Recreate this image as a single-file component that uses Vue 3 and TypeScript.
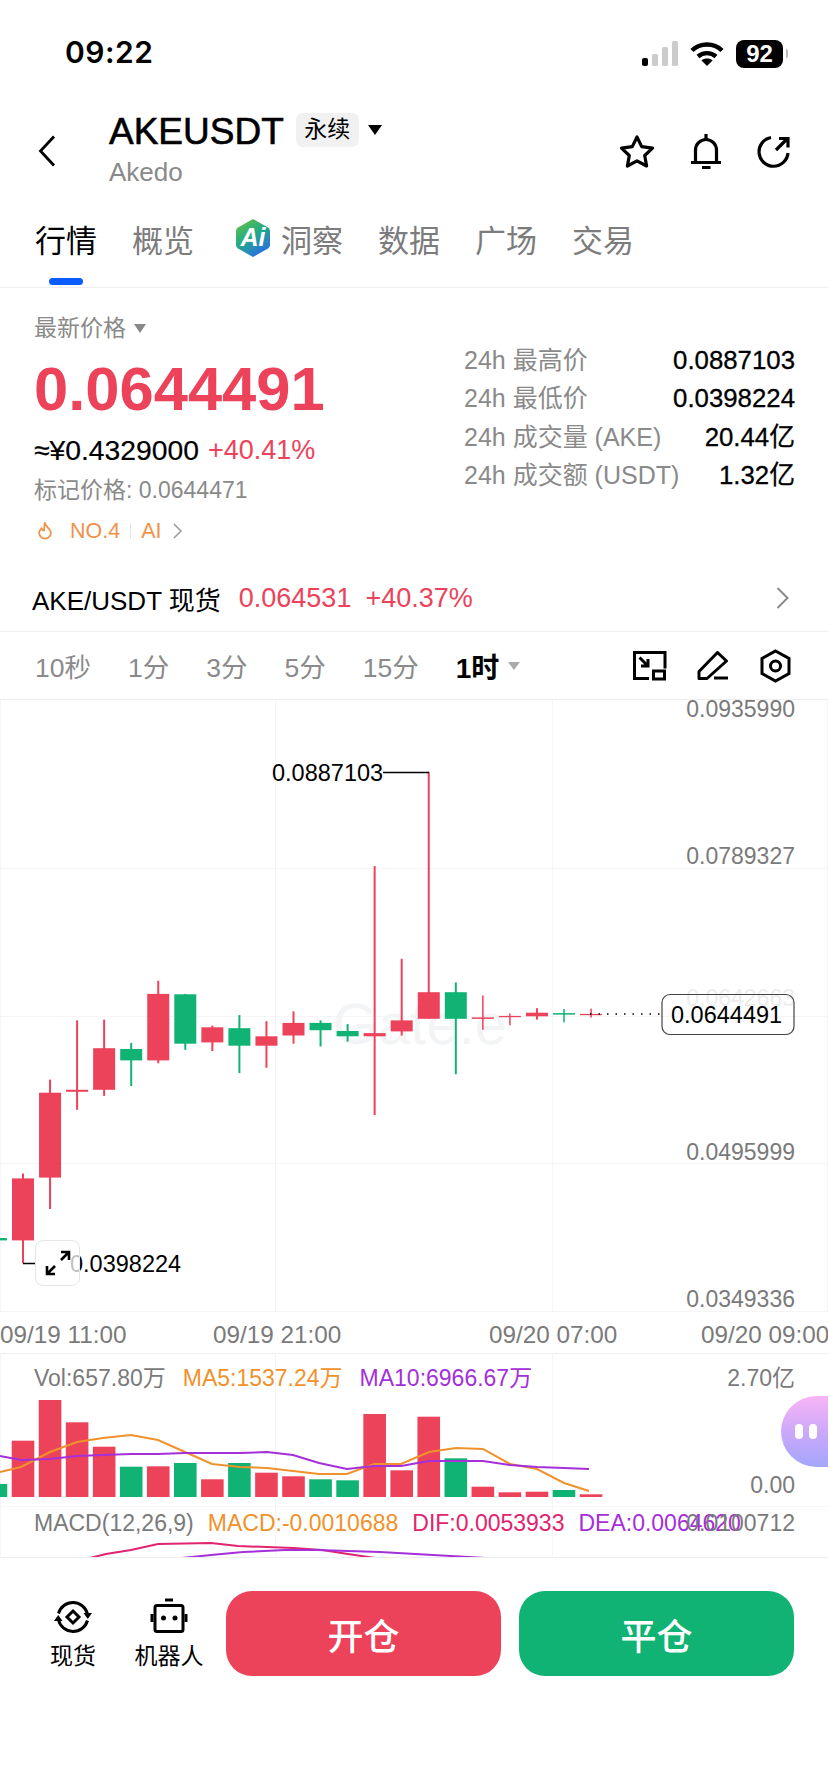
<script setup lang="ts">
interface Candle {
  up: boolean
  high: number
  low: number
  open: number
  close: number
  vol: number
}

const RED = '#ec425a'
const GREEN = '#10b373'
const STEP = 27.05
const BAR = 22

// y values are page pixels, the svg viewBoxes start at the block's page offset
const candles: Candle[] = [
  { up: false, high: 1238, low: 1240.4, open: 1238, close: 1240.4, vol: 1485 },
  { up: true, high: 1173.5, low: 1263.3, open: 1178.4, close: 1240.4, vol: 1441.7 },
  { up: true, high: 1079.6, low: 1209, open: 1092.7, close: 1177.6, vol: 1401 },
  { up: true, high: 1020.4, low: 1109.8, open: 1089.8, close: 1091.8, vol: 1423.3 },
  { up: true, high: 1019.6, low: 1095.9, open: 1048.2, close: 1089.8, vol: 1447.7 },
  { up: false, high: 1042.9, low: 1086.1, open: 1049, close: 1060.4, vol: 1467.7 },
  { up: true, high: 980.8, low: 1063.3, open: 993.9, close: 1060.4, vol: 1467.3 },
  { up: false, high: 993.9, low: 1049.8, open: 994.3, close: 1043.7, vol: 1464 },
  { up: true, high: 1025.7, low: 1051, open: 1027.3, close: 1042.4, vol: 1480.3 },
  { up: false, high: 1015.1, low: 1073.1, open: 1028.2, close: 1045.7, vol: 1464 },
  { up: true, high: 1021.2, low: 1067.8, open: 1036.3, close: 1045.7, vol: 1473.7 },
  { up: true, high: 1011.4, low: 1043.7, open: 1022.9, close: 1035.5, vol: 1477.3 },
  { up: false, high: 1020.4, low: 1046.5, open: 1022.9, close: 1030.2, vol: 1480.3 },
  { up: false, high: 1024.1, low: 1041.6, open: 1031, close: 1036.3, vol: 1481.3 },
  { up: true, high: 866.1, low: 1115.1, open: 1033.1, close: 1036.3, vol: 1415 },
  { up: true, high: 958.8, low: 1035.5, open: 1020.4, close: 1031.4, vol: 1471.3 },
  { up: true, high: 771.8, low: 1018.8, open: 992.2, close: 1018.8, vol: 1417.7 },
  { up: false, high: 982.4, low: 1074.3, open: 992.2, close: 1018.8, vol: 1459.3 },
  { up: true, high: 995.5, low: 1029.8, open: 1017.4, close: 1018.9, vol: 1487.7 },
  { up: true, high: 1013.5, low: 1025.3, open: 1015.9, close: 1017.2, vol: 1493.3 },
  { up: true, high: 1008.2, low: 1019.6, open: 1012.7, close: 1016.3, vol: 1492.7 },
  { up: false, high: 1009, low: 1022.4, open: 1013.1, close: 1014.6, vol: 1491 },
  { up: true, high: 1008.6, low: 1017.6, open: 1013.9, close: 1015.2, vol: 1495.3 },
]

const centerX = (i: number) => 23 + STEP * (i - 1)
const thin = (c: Candle) => c.close - c.open < 2

const ma5 = '0,1473 21,1468 50,1453 77,1443 103,1439 131,1436 158,1441 185,1453 212,1465 240,1468 267,1469 293,1472 319,1475 347,1475 374,1465 401,1465 429,1453 456,1449 483,1450 510,1465 537,1470 564,1484 589,1492'
const ma10 = '0,1457 21,1461 50,1460 77,1457 103,1456 131,1455 158,1455 185,1454 212,1454 240,1454 267,1453 293,1456 319,1464 347,1470 374,1467 401,1467 429,1462 456,1462 483,1462 510,1466 537,1468 564,1469 589,1470'
const dif = '90,1559 106,1555 131,1551 158,1545 211,1544 238,1547 293,1549 322,1551 348,1555 375,1559'
const dea = '182,1559 211,1556 243,1553 285,1551 317,1551 380,1553 433,1556 486,1559'

const tabs = ['概览', '洞察', '数据', '广场', '交易']
const stats = [
  { label: '24h 最高价', value: '0.0887103' },
  { label: '24h 最低价', value: '0.0398224' },
  { label: '24h 成交量 (AKE)', value: '20.44亿' },
  { label: '24h 成交额 (USDT)', value: '1.32亿' },
]
const frames = ['10秒', '1分', '3分', '5分', '15分']
const yLabels = [
  { text: '0.0935990', y: 717 },
  { text: '0.0789327', y: 864 },
  { text: '0.0495999', y: 1160 },
  { text: '0.0349336', y: 1307 },
]
const xLabels = [
  { text: '09/19 11:00', x: 0 },
  { text: '09/19 21:00', x: 213 },
  { text: '09/20 07:00', x: 489 },
  { text: '09/20 09:00', x: 701 },
]
</script>

<template>
  <div class="page">
    <div class="status">
      <span class="time">09:22</span>
      <div class="status-icons">
        <svg width="38" height="26" viewBox="0 0 38 26">
          <rect x="0" y="17" width="6" height="8" rx="2" fill="#000" />
          <rect x="10" y="13" width="6" height="12" rx="1.5" fill="#ccc" />
          <rect x="20" y="6" width="6" height="19" rx="1.5" fill="#ccc" />
          <rect x="30" y="0" width="6" height="25" rx="1.5" fill="#ccc" />
        </svg>
        <svg class="wifi" width="34" height="26" viewBox="0 0 34 26" fill="none" stroke="#000" stroke-width="4.4">
          <path d="M2 9.5C10 1.5 24 1.5 32 9.5" />
          <path d="M8 15.5C13 11 21 11 26 15.5" />
          <path d="M17 25l-5.5-5.6c3-2.6 8-2.6 11 0z" fill="#000" stroke="none" />
        </svg>
        <span class="battery">92</span>
        <span class="battery-nub"></span>
      </div>
    </div>

    <header class="head">
      <svg class="back" width="18" height="32" viewBox="0 0 18 32" fill="none" stroke="#000" stroke-width="2.8">
        <path d="M16 1.5L2.5 16 16 30.5" />
      </svg>
      <div class="title">
        <div class="name-row">
          <span class="name">AKEUSDT</span>
          <span class="badge">永续</span>
          <span class="tri"></span>
        </div>
        <div class="sub">Akedo</div>
      </div>
      <div class="actions">
        <svg width="36" height="36" viewBox="619 134 36 36" fill="none" stroke="#000" stroke-width="3.2" stroke-linejoin="round">
          <path d="M637 137l4.7 9.6 10.8 1.5-7.8 7.4 1.9 10.5-9.6-5.1-9.6 5.1 1.9-10.5-7.8-7.4 10.8-1.5z" />
        </svg>
        <svg width="32" height="36" viewBox="689 134 32 36" fill="none" stroke="#000" stroke-width="3.2">
          <path d="M694.5 162v-12a10.5 10.5 0 0 1 21 0v12" />
          <path d="M690 162.5h30M701 167.5h8.5M705 134v5" />
        </svg>
        <svg width="34" height="36" viewBox="756 134 34 36" fill="none" stroke="#000" stroke-width="3.2">
          <path d="M770 137.5A14.5 14.5 0 1 0 787 153" />
          <path d="M775 150l11-11M778 138.5h9v9" />
        </svg>
      </div>
    </header>

    <nav class="tabs">
      <div class="tab active">行情<i class="bar"></i></div>
      <template v-for="t in tabs" :key="t">
        <div class="tab">
          <svg v-if="t === '洞察'" class="ai" width="36" height="40" viewBox="0 0 36 40">
            <defs>
              <linearGradient id="aiGrad" x1="0.1" y1="0" x2="0.7" y2="1">
                <stop offset="0" stop-color="#63c23f" />
                <stop offset="0.5" stop-color="#23a98a" />
                <stop offset="1" stop-color="#2a6be8" />
              </linearGradient>
            </defs>
            <path d="M18 1l15 8.5q2 1.2 2 3.5v14q0 2.3-2 3.5L18 39 3 30.5q-2-1.2-2-3.5V13q0-2.3 2-3.5z" fill="url(#aiGrad)" />
            <text x="18" y="28" text-anchor="middle" class="ai-text">Ai</text>
          </svg>
          {{ t }}
        </div>
      </template>
    </nav>

    <section class="summary">
      <div class="left">
        <div class="latest">最新价格<i class="tri-sm"></i></div>
        <div class="price">0.0644491</div>
        <div class="fiat"><span class="cny">≈¥0.4329000</span><span class="up">+40.41%</span></div>
        <div class="mark">标记价格: 0.0644471</div>
        <div class="rank">
          <svg width="16" height="18" viewBox="0 0 16 18" fill="none" stroke="#f0924a" stroke-width="1.8">
            <path d="M8 1c.5 3 4 5 5.5 8a5.8 5.8 0 1 1-11 0C3.5 8 4 7 4.5 6.500 5 8 6 8.500 7 8.500 7.500 6 7 3 8 1z" />
          </svg>
          <span class="no">NO.4</span>
          <i class="sep"></i>
          <span>AI</span>
          <svg width="9" height="16" viewBox="0 0 9 16" fill="none" stroke="#999" stroke-width="1.5">
            <path d="M1 1l7 7-7 7" />
          </svg>
        </div>
      </div>
      <div class="right">
        <div v-for="s in stats" :key="s.label" class="stat">
          <span class="stat-label">{{ s.label }}</span>
          <span class="stat-value">{{ s.value }}</span>
        </div>
      </div>
    </section>

    <div class="spot">
      <span class="spot-name">AKE/USDT 现货</span>
      <span class="spot-price">0.064531</span>
      <span class="spot-price">+40.37%</span>
      <svg class="spot-arrow" width="13" height="22" viewBox="0 0 13 22" fill="none" stroke="#8a8a8a" stroke-width="2">
        <path d="M1.5 1l10 10-10 10" />
      </svg>
    </div>

    <div class="frames">
      <span v-for="f in frames" :key="f" class="frame">{{ f }}</span>
      <span class="frame current">1时<i class="tri-gray"></i></span>
      <div class="frame-icons">
        <svg width="34" height="30" viewBox="631 651 34 30" fill="none" stroke="#000" stroke-width="3">
          <path d="M647 678.5h-14.5v-26h30.5v16" />
          <rect x="651.5" y="671" width="11" height="8" />
          <path d="M637.5 657.5l8.5 8.5M646 659v7h-7" />
        </svg>
        <svg width="32" height="30" viewBox="696 651 32 30" fill="none" stroke="#000" stroke-width="3" stroke-linejoin="round">
          <path d="M698 671.5l18.5-19 9 8.5-19.5 17.5h-8z" />
          <path d="M713 678h14" />
        </svg>
        <svg width="32" height="34" viewBox="758 649 32 34" fill="none" stroke="#000" stroke-width="3">
          <path d="M774.5 651l13.5 7.5v15l-13.5 7.5-13.5-7.5v-15z" />
          <circle cx="774.5" cy="666" r="5" />
        </svg>
      </div>
    </div>

    <div class="chart">
      <svg class="plot" width="828" height="654" viewBox="0 700 828 654">
        <g stroke="#f5f5f5" stroke-width="1">
          <path d="M0 868.5H828M0 1016.5H828M0 1163.5H828M0 1311.5H828" />
          <path d="M0.5 700V1311M275.5 700V1311M552.5 700V1311M827.5 700V1311" />
        </g>
        <text x="333" y="1044" class="mark-text">Gate.e</text>
        <g v-for="(c, i) in candles" :key="i">
          <rect
            v-if="i > 0"
            :x="centerX(i) - (thin(c) ? 0.75 : 1)"
            :y="c.high"
            :width="thin(c) ? 1.5 : 2"
            :height="c.low - c.high"
            :fill="c.up ? RED : GREEN"
          />
          <rect
            :x="centerX(i) - BAR / 2"
            :y="c.open"
            :width="BAR"
            :height="c.close - c.open"
            :fill="c.up ? RED : GREEN"
          />
        </g>
        <path d="M383 772.5H429M23 1263.5H36" stroke="#000" stroke-width="1.5" />
        <path d="M590 1014H660" stroke="#000" stroke-width="1.5" stroke-dasharray="1.5 7" />
        <text x="272" y="781" class="axis high">0.0887103</text>
        <text x="70" y="1272" class="axis high">0.0398224</text>
        <text x="795" y="1006" text-anchor="end" class="axis ghost">0.0642663</text>
        <text v-for="l in yLabels" :key="l.text" x="795" :y="l.y" text-anchor="end" class="axis">{{ l.text }}</text>
        <text v-for="l in xLabels" :key="l.text" :x="l.x" y="1343" class="axis time-label">{{ l.text }}</text>
        <rect x="662" y="994.5" width="132" height="40" rx="8" fill="none" stroke="#444" stroke-width="1.2" />
        <text x="671" y="1022.5" class="axis high">0.0644491</text>
      </svg>
      <button class="expand" type="button">
        <svg width="30" height="30" viewBox="0 0 30 30" fill="none" stroke="#000" stroke-width="2.6">
          <path d="M4 26L12 18M18 12L26 4M18 4h8v8M4 18v8h8" />
        </svg>
      </button>
    </div>

    <div class="lower">
      <svg class="plot" width="828" height="203" viewBox="0 1355 828 203">
        <path d="M275.5 1355V1558M552.5 1355V1558M0.5 1355V1558" stroke="#f5f5f5" />
        <path d="M0 1507.5H828" stroke="#f7f7f7" />
        <g v-for="(c, i) in candles" :key="i">
          <rect
            :x="centerX(i) - 11.3"
            :y="c.vol"
            width="22.6"
            :height="1498 - c.vol"
            :fill="c.up ? RED : GREEN"
          />
        </g>
        <polyline :points="ma5" fill="none" stroke="#f0922b" stroke-width="2" />
        <polyline :points="ma10" fill="none" stroke="#a52fd8" stroke-width="2" />
        <polyline :points="dif" fill="none" stroke="#e0246f" stroke-width="2" />
        <polyline :points="dea" fill="none" stroke="#a52fd8" stroke-width="2" />
      </svg>
      <div class="legend vol-legend">
        <span class="gray">Vol:657.80万</span>
        <span class="orange">MA5:1537.24万</span>
        <span class="purple">MA10:6966.67万</span>
        <span class="gray edge">2.70亿</span>
      </div>
      <div class="zero gray">0.00</div>
      <div class="legend macd-legend">
        <span class="gray">MACD(12,26,9)</span>
        <span class="orange">MACD:-0.0010688</span>
        <span class="pink">DIF:0.0053933</span>
        <span class="purple">DEA:0.0064620</span>
        <span class="gray edge">0.0100712</span>
      </div>
      <div class="buddy"><i></i><i></i></div>
    </div>

    <footer class="bottom">
      <div class="shortcut">
        <svg width="38" height="38" viewBox="0 0 38 38" fill="none" stroke="#000" stroke-width="3">
          <path d="M4.5 15.5A15 15 0 0 1 33.5 16" />
          <path d="M33.5 22.5A15 15 0 0 1 4.5 22" />
          <path d="M29.5 15h8.5l-4.2 6zM8.5 23H0l4.2-6z" fill="#000" stroke="none" />
          <path d="M19 13l6 6-6 6-6-6z" />
        </svg>
        <span>现货</span>
      </div>
      <div class="shortcut robot">
        <svg width="38" height="38" viewBox="0 0 38 38" fill="none" stroke="#000" stroke-width="3">
          <rect x="5" y="7.5" width="28" height="26" rx="2" />
          <path d="M15 2h8M2 16v8M36 16v8" />
          <circle cx="13.5" cy="20" r="2.5" fill="#000" stroke="none" />
          <circle cx="25" cy="20" r="2.5" fill="#000" stroke="none" />
        </svg>
        <span>机器人</span>
      </div>
      <div class="trade">
        <button class="btn open" type="button">开仓</button>
        <button class="btn close" type="button">平仓</button>
      </div>
    </footer>
  </div>
</template>

<style>
html, body {
  margin: 0;
  background: #fff;
}
</style>

<style scoped>
.page {
  width: 828px;
  height: 1792px;
  overflow: hidden;
  background: #fff;
  color: #000;
  font-family: "Liberation Sans", "Noto Sans CJK SC", sans-serif;
}
i { display: block; font-style: normal; }

.status {
  height: 100px;
  box-sizing: border-box;
  padding: 36px 0 0 65px;
  display: flex;
  justify-content: space-between;
  align-items: flex-start;
}
.time {
  font-family: Inter, "Liberation Sans", sans-serif;
  font-size: 30px;
  font-weight: 600;
  line-height: 32px;
  letter-spacing: 0.5px;
}
.status-icons {
  display: flex;
  align-items: center;
  margin-right: 40px;
  margin-top: 4px;
  height: 27px;
}
.wifi { margin-left: 10px; }
.battery {
  margin-left: 12px;
  width: 47px;
  height: 28px;
  border-radius: 8px;
  background: #000;
  color: #fff;
  font-size: 24px;
  font-weight: 700;
  line-height: 28px;
  text-align: center;
}
.battery-nub {
  width: 2px;
  height: 9px;
  margin-left: 3px;
  border-radius: 0 2px 2px 0;
  background: #bbb;
}

.head {
  height: 95px;
  display: flex;
  align-items: flex-start;
  padding-left: 38px;
}
.back { margin-top: 35px; }
.title { margin-left: 53px; padding-top: 13px; }
.name-row { display: flex; align-items: center; height: 34px; }
.name {
  margin-top: 3px;
  font-size: 37px;
  line-height: 34px;
  -webkit-text-stroke: 0.6px #000;
}
.badge {
  margin-left: 12px;
  width: 63px;
  height: 34px;
  border-radius: 7px;
  background: #f1f1f1;
  font-size: 23px;
  line-height: 33px;
  text-align: center;
}
.tri {
  margin-left: 9px;
  border-left: 7.5px solid transparent;
  border-right: 7.5px solid transparent;
  border-top: 10px solid #000;
}
.sub {
  margin-top: 9px;
  font-size: 26px;
  line-height: 32px;
  color: #8a8a8a;
}
.actions {
  margin-left: auto;
  margin-right: 37px;
  margin-top: 34px;
  display: flex;
  gap: 35px;
}

.tabs {
  height: 92px;
  display: flex;
  align-items: center;
  gap: 35px;
  padding-left: 35px;
  border-bottom: 1px solid #eee;
  font-size: 31px;
  color: #7c7c7c;
}
.tab {
  position: relative;
  display: flex;
  align-items: center;
  height: 40px;
  transform: translateY(-3px);
}
.tab.active { color: #000; }
.bar {
  position: absolute;
  left: 14px;
  top: 60px;
  width: 34px;
  height: 7px;
  border-radius: 3.5px;
  background: #0b5cff;
}
.ai { margin: 0 10px 0 6px; }
.ai-text {
  font-size: 25px;
  font-weight: 700;
  font-style: italic;
  fill: #fff;
}

.summary {
  display: flex;
  justify-content: space-between;
  padding: 24px 33px 19px 34px;
}
.latest {
  display: flex;
  align-items: center;
  font-size: 23px;
  line-height: 32px;
  color: #8a8a8a;
}
.tri-sm {
  margin-left: 8px;
  border-left: 6.5px solid transparent;
  border-right: 6.5px solid transparent;
  border-top: 9px solid #888;
}
.price {
  margin-top: 10px;
  font-size: 61.5px;
  font-weight: 700;
  line-height: 70px;
  color: #ec425a;
}
.fiat {
  display: flex;
  align-items: center;
  gap: 9px;
  margin-top: 9px;
  line-height: 34px;
}
.cny { font-size: 28.3px; -webkit-text-stroke: 0.2px #000; }
.up { font-size: 27px; color: #ec425a; }
.mark {
  margin-top: 8px;
  font-size: 23px;
  line-height: 30px;
  color: #8a8a8a;
}
.rank {
  display: flex;
  align-items: center;
  margin-top: 11px;
  height: 30px;
  font-size: 21.5px;
  color: #f0924a;
}
.rank svg:first-child { margin-left: 3px; }
.no { margin-left: 17px; }
.sep {
  width: 1px;
  height: 16px;
  margin: 0 10px;
  background: #e5e5e5;
}
.rank svg:last-child { margin-left: 11px; }

.right {
  width: 331px;
  padding-top: 29px;
}
.stat {
  display: flex;
  justify-content: space-between;
  height: 38.3px;
  line-height: 38px;
  font-size: 25px;
}
.stat-label { color: #8a8a8a; }
.stat-value { font-size: 25.8px; -webkit-text-stroke: 0.3px #000; }

.spot {
  height: 66px;
  display: flex;
  align-items: center;
  padding: 0 39px 0 32px;
  border-bottom: 1px solid #eee;
}
.spot-name { font-size: 26px; }
.spot-price { margin-left: 14px; font-size: 27px; color: #ec425a; }
.spot-name + .spot-price { margin-left: 18px; }
.spot-arrow { margin-left: auto; }

.frames {
  height: 67px;
  display: flex;
  align-items: center;
  gap: 37px;
  padding: 0 37px 0 35px;
  border-bottom: 1px solid #eee;
  font-size: 26.5px;
  color: #8a8a8a;
}
.current {
  display: flex;
  align-items: center;
  color: #000;
  font-size: 28px;
  font-weight: 700;
}
.tri-gray {
  margin-left: 9px;
  border-left: 6.5px solid transparent;
  border-right: 6.5px solid transparent;
  border-top: 8px solid #aaa;
}
.frame-icons {
  margin-left: auto;
  display: flex;
  align-items: center;
  gap: 30px;
}

.chart {
  position: relative;
  height: 653px;
  border-bottom: 1px solid #eee;
}
.plot { position: absolute; left: 0; top: 0; display: block; }
.axis {
  font-size: 23px;
  fill: #7a7a7a;
}
.axis.high { font-size: 23.5px; fill: #000; }
.axis.ghost { fill: #ededed; }
.time-label { font-size: 24.3px; }
.mark-text {
  font-size: 58px;
  fill: #f2f4f6;
}
.expand {
  position: absolute;
  left: 35px;
  top: 540px;
  width: 45px;
  height: 46px;
  padding: 0;
  display: flex;
  align-items: center;
  justify-content: center;
  border: 1px solid #e6e6e6;
  border-radius: 8px;
  background: rgba(255, 255, 255, 0.75);
}

.lower {
  position: relative;
  height: 203px;
  border-bottom: 1px solid #eee;
  font-size: 23px;
}
.legend {
  position: absolute;
  left: 34px;
  right: 33px;
  display: flex;
  gap: 17px;
  line-height: 30px;
}
.vol-legend { top: 9px; }
.macd-legend { top: 154px; gap: 14px; }
.edge { position: absolute; right: 0; top: 0; }
.gray { color: #7a7a7a; }
.orange { color: #f0922b; }
.purple { color: #a52fd8; }
.pink { color: #e0246f; }
.zero {
  position: absolute;
  right: 33px;
  top: 116px;
  line-height: 30px;
}
.buddy {
  position: absolute;
  right: 0;
  top: 42px;
  width: 47px;
  height: 71px;
  display: flex;
  align-items: center;
  gap: 6px;
  padding-left: 14px;
  box-sizing: border-box;
  border-radius: 36px 0 0 36px;
  background: linear-gradient(180deg, #f8b4f5 0%, #c7a8fb 55%, #a3a6fb 100%);
}
.buddy i {
  width: 8px;
  height: 15px;
  border-radius: 4px;
  background: #fff;
}

.bottom {
  display: flex;
  align-items: flex-start;
  padding: 33px 34px 0 34px;
}
.shortcut {
  width: 78px;
  display: flex;
  flex-direction: column;
  align-items: center;
  padding-top: 7px;
  font-size: 23px;
  line-height: 30px;
}
.shortcut.robot { margin-left: 18px; }
.shortcut span { margin-top: 5px; white-space: nowrap; }
.trade {
  margin-left: auto;
  display: flex;
  gap: 18px;
}
.btn {
  width: 275px;
  height: 85px;
  border: 0;
  border-radius: 26px;
  color: #fff;
  font-family: inherit;
  font-size: 36px;
  font-weight: 500;
}
.open { background: #ec425a; }
.close { background: #10b373; }
</style>
